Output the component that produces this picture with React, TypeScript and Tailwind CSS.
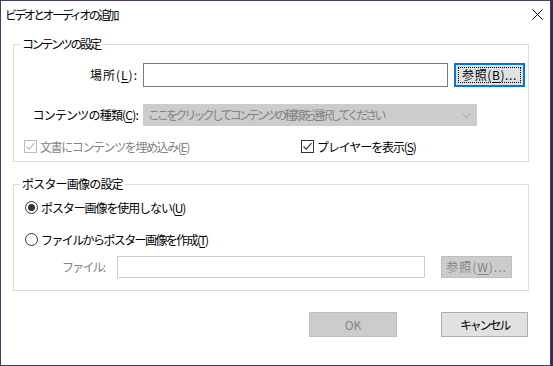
import React from "react";

const CheckBox = ({ disabled }: { disabled?: boolean }) => (
  <span
    className={`flex h-[13px] w-[13px] shrink-0 items-center justify-center border bg-white ${
      disabled ? "border-[#bcbcbc]" : "border-[#333333]"
    }`}
  >
    <svg width="11" height="11" viewBox="0 0 11 11">
      <path
        d="M1.5 5.5 L4.2 8.2 L9.5 2.2"
        fill="none"
        stroke={disabled ? "#bcbcbc" : "#333333"}
        strokeWidth="1.1"
      />
    </svg>
  </span>
);

const Radio = ({ checked }: { checked?: boolean }) => (
  <span className="flex h-[13px] w-[13px] shrink-0 items-center justify-center rounded-full border border-[#333333] bg-white">
    {checked && <span className="h-[7px] w-[7px] rounded-full bg-[#333333]" />}
  </span>
);

const App = () => {
  return (
    <div className="h-[366px] w-[553px] bg-[#3b2d4d]">
      <div className="flex h-[366px] w-[551px] flex-col border border-[#4a3a5e] bg-white text-[12px] leading-[16px] text-black font-['Noto_Sans_CJK_JP','Noto_Sans',sans-serif]">
        {/* title bar */}
        <div className="flex h-[29px] shrink-0 items-center justify-between pb-[2px] pl-[4px] pr-[7px]">
          <span className="tracking-[-2.6px]">ビデオとオーディオの追加</span>
          <svg width="11" height="11" viewBox="0 0 11 11">
            <path d="M0.5 0.5 L10.5 10.5 M10.5 0.5 L0.5 10.5" stroke="#000" strokeWidth="1" />
          </svg>
        </div>

        <div className="flex flex-col px-[12px]">
          {/* content settings */}
          <fieldset className="mt-[6px] w-[516px] border border-[#dcdcdc] pb-[8px] pl-[6px]">
            <legend className="px-[2px] tracking-[-2.3px]">コンテンツの設定</legend>

            <div className="mt-[11px] flex h-[24px] items-center">
              <span className="w-[118px] text-right tracking-[1px]">
                場所(<u className="underline-offset-2">L</u>):
              </span>
              <input
                className="ml-[5px] h-[24px] w-[305px] border border-[#7a7a7a] bg-white outline-none"
                defaultValue=""
              />
              <button className="relative ml-[6px] flex h-[24px] w-[71px] items-center justify-center border-2 border-[#0078d7] bg-[#e1e1e1] tracking-[0.6px]">
                <span className="pointer-events-none absolute inset-[2px] border border-dotted border-black" />
                参照(<u className="underline-offset-2">B</u>)...
              </button>
            </div>

            <div className="mt-[17px] flex h-[22px] items-center">
              <span className="w-[118px] text-right tracking-[-0.8px]">
                コンテンツの種類(<u className="underline-offset-2">C</u>):
              </span>
              <div className="ml-[5px] flex h-[22px] w-[334px] items-center justify-between border border-[#cccccc] bg-[#cccccc] pl-[4px] pr-[5px] text-[#838383]">
                <span className="tracking-[-2.9px]">ここをクリックしてコンテンツの種類を選択してください</span>
                <svg width="9" height="5" viewBox="0 0 9 5">
                  <path d="M0.5 0.5 L4.5 4.5 L8.5 0.5" fill="none" stroke="#a8a8a8" strokeWidth="1" />
                </svg>
              </div>
            </div>

            <div className="mt-[14px] flex h-[13px] items-center">
              <div className="ml-[4px] flex w-[277px] items-center gap-[3px] text-[#838383]">
                <CheckBox disabled />
                <span className="tracking-[-1.4px]">
                  文書にコンテンツを埋め込み(<u className="underline-offset-2">E</u>)
                </span>
              </div>
              <div className="flex items-center gap-[3px]">
                <CheckBox />
                <span className="tracking-[-1.1px]">
                  プレイヤーを表示(<u className="underline-offset-2">S</u>)
                </span>
              </div>
            </div>
          </fieldset>

          {/* poster settings */}
          <fieldset className="mt-[14px] w-[516px] border border-[#dcdcdc] pb-[12px] pl-[6px]">
            <legend className="px-[2px] tracking-[-0.8px]">ポスター画像の設定</legend>

            <div className="ml-[5px] mt-[9px] flex h-[13px] items-center gap-[3px]">
              <Radio checked />
              <span className="tracking-[-1.1px]">
                ポスター画像を使用しない(<u className="underline-offset-2">U</u>)
              </span>
            </div>

            <div className="ml-[5px] mt-[19px] flex h-[13px] items-center gap-[3px]">
              <Radio />
              <span className="tracking-[-1.6px]">
                ファイルからポスター画像を作成(<u className="underline-offset-2">T</u>)
              </span>
            </div>

            <div className="mt-[10px] flex h-[22px] items-center">
              <span className="w-[97px] pl-[42px] text-[#838383] tracking-[-1.8px]">ファイル:</span>
              <div className="h-[22px] w-[308px] border border-[#cccccc] bg-white" />
              <button className="ml-[16px] flex h-[22px] w-[71px] items-center justify-center border border-[#bfbfbf] bg-[#cccccc] text-[#838383] tracking-[1px]">
                参照(<u className="underline-offset-2">W</u>)...
              </button>
            </div>
          </fieldset>

          {/* dialog buttons */}
          <div className="mt-[21px] flex w-[516px] justify-end gap-[44px] pr-[1px]">
            <button className="flex h-[25px] w-[88px] items-center justify-center border border-[#bfbfbf] bg-[#cccccc] text-[#838383]">
              OK
            </button>
            <button className="flex h-[25px] w-[87px] items-center justify-center border border-[#adadad] bg-[#e1e1e1] tracking-[-2.2px]">
              キャンセル
            </button>
          </div>
        </div>
      </div>
    </div>
  );
};

export default App;
